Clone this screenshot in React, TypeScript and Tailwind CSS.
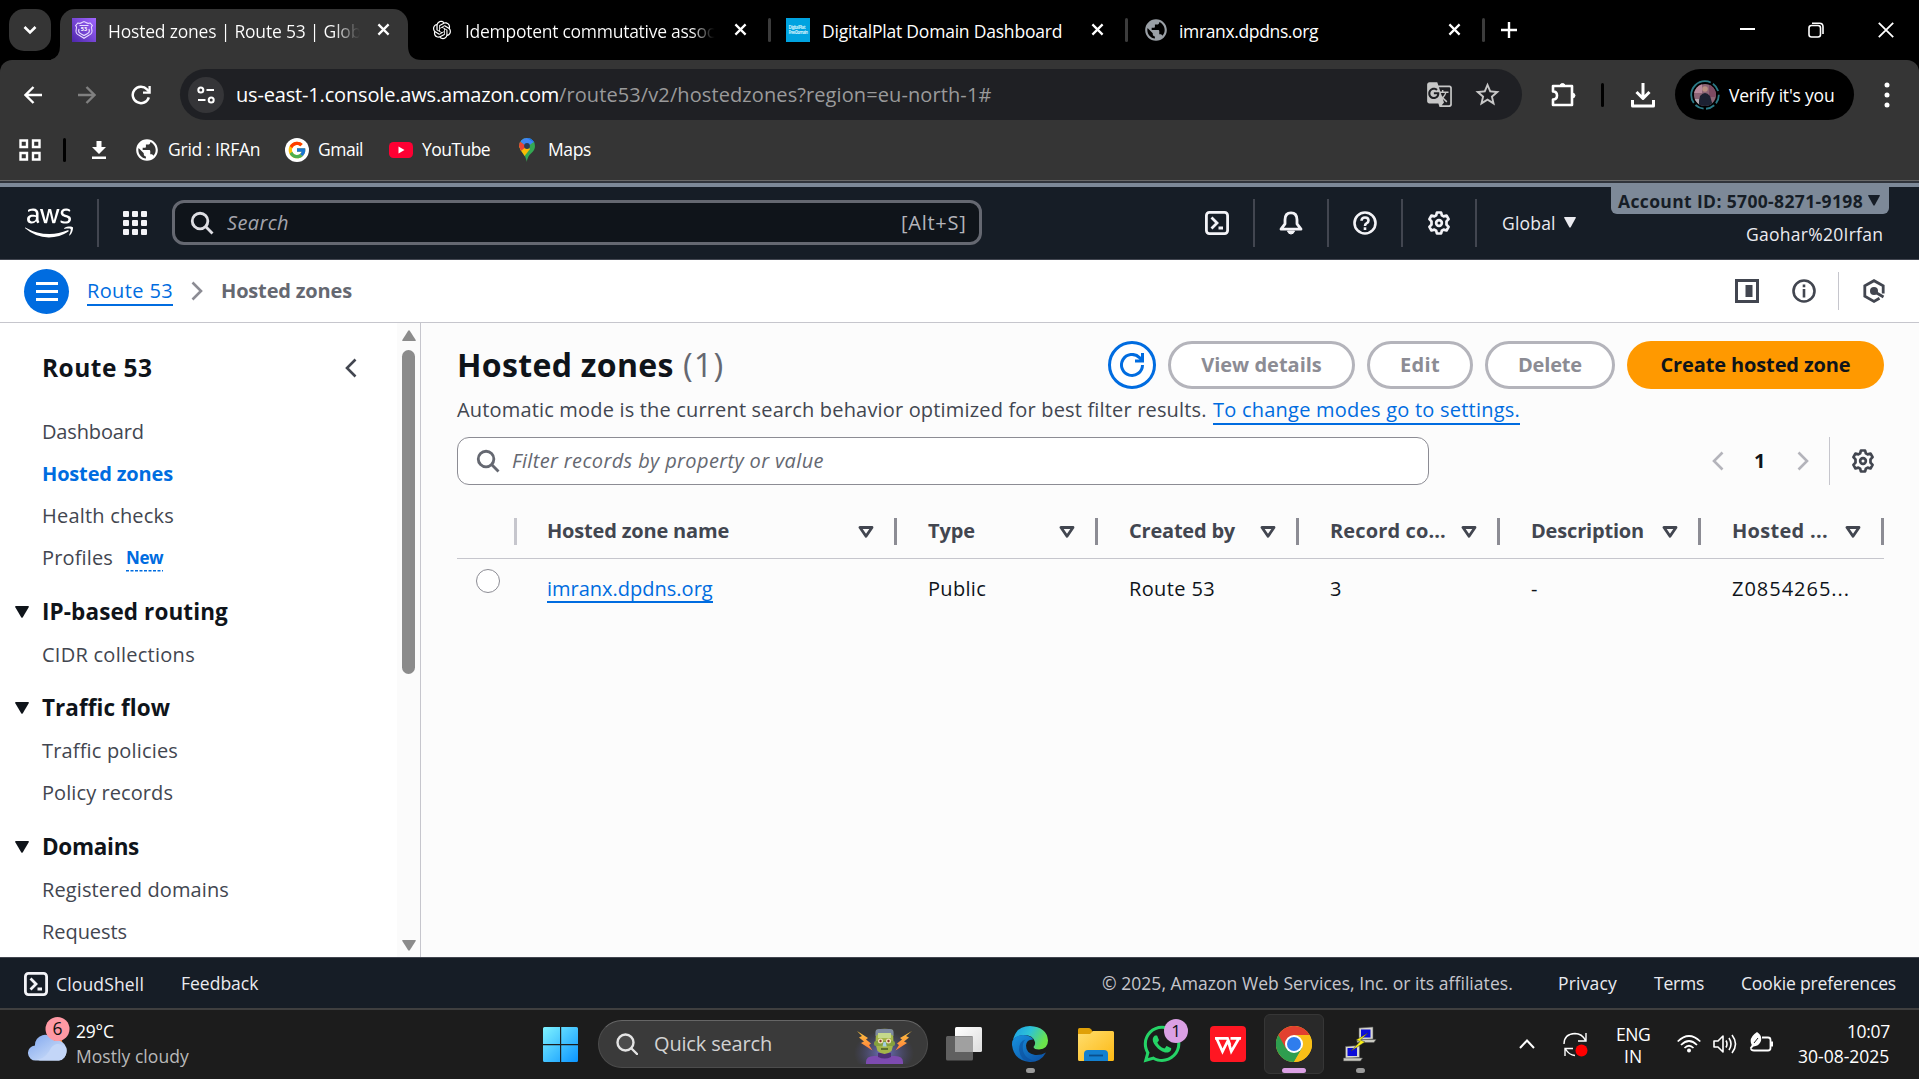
import React from "react";
import { FaAws, FaWhatsapp } from "react-icons/fa";
import { FcGoogle } from "react-icons/fc";
import { RiOpenaiFill } from "react-icons/ri";
import {
  MdPublic,
  MdGTranslate,
  MdStarBorder,
} from "react-icons/md";

function T({ c = "", children }: { c?: string; children: React.ReactNode }) {
  return <span className={`block shrink-0 whitespace-nowrap ${c}`}>{children}</span>;
}

/* ---------- shared icons ---------- */
function Cross({ c }: { c: string }) {
  return (
    <svg className={`h-[13px] w-[13px] shrink-0 ${c}`} viewBox="0 0 14 14" fill="none" stroke="#fff" strokeWidth="2.4">
      <path d="M1.5 1.5l11 11M12.5 1.5l-11 11" />
    </svg>
  );
}

function Gear({ c }: { c: string }) {
  return (
    <svg className={`h-6 w-6 shrink-0 ${c}`} viewBox="0 0 16 16" fill="none" stroke="currentColor" strokeWidth="1.8" strokeLinejoin="round">
      <path d="M6.6 1h2.8l.5 1.9 1.2.7 1.9-.6 1.4 2.4L13 6.900v2.200l1.400 1.500L13 13l-1.900-.6-1.200.7-.5 1.900H6.600l-.5-1.900-1.200-.7L3 13l-1.400-2.400L3 9.100V6.900L1.600 5.400 3 3l1.900.6 1.200-.7z" />
      <circle cx="8" cy="8" r="1.900" />
    </svg>
  );
}

function Magnifier({ c }: { c: string }) {
  return (
    <svg className={`h-6 w-6 shrink-0 ${c}`} viewBox="0 0 16 16" fill="none" stroke="currentColor" strokeWidth="1.900">
      <circle cx="6.700" cy="6.700" r="5.200" />
      <path d="M10.400 10.400l4.600 4.600" />
    </svg>
  );
}

function Shell() {
  return (
    <svg className="h-6 w-6 shrink-0" viewBox="0 0 24 24" fill="none" stroke="#f3f3f7" strokeWidth="2.800">
      <rect x="1.400" y="1.400" width="21.200" height="21.200" rx="3" />
      <path d="M6.500 6.500l5.500 5.500-5.500 5.500M13.500 17h4.500" />
    </svg>
  );
}

function Chevron({ c, right = false }: { c: string; right?: boolean }) {
  return (
    <svg className={`h-5 w-3 shrink-0 ${c}`} viewBox="0 0 12 20" fill="none" stroke="currentColor" strokeWidth="2.600">
      <path d={right ? "M1.5 1.5l8.500 8.500-8.500 8.500" : "M10.500 1.500L2 10l8.500 8.500"} />
    </svg>
  );
}

function Caret({ c }: { c: string }) {
  return (
    <svg className={`shrink-0 ${c}`} viewBox="0 0 14 12" fill="currentColor" preserveAspectRatio="none">
      <path d="M.8 0h12.400q1 .3.5 1.200L7.800 11.300q-.8 1-1.600 0L.3 1.200Q-.2.3.8 0z" />
    </svg>
  );
}

function Globe({ c }: { c: string }) {
  return <MdPublic className={`shrink-0 ${c}`} />;
}

/* ---------- browser chrome ---------- */
function TabStrip() {
  return (
    <div className="flex h-[60px] bg-black pt-[9px] text-[17.500px] leading-[24px] text-white">
      <div className="ml-[9px] flex h-[42px] w-[42px] items-center justify-center rounded-[15px] bg-[#353535]">
        <svg className="h-3 w-4" viewBox="0 0 16 12" fill="none" stroke="#fff" strokeWidth="2.600">
          <path d="M2.500 3l5.500 5.500L13.500 3" />
        </svg>
      </div>
      <div className="flex w-[9px] flex-col justify-end overflow-hidden">
        <svg className="-ml-[5px] h-[14px] w-[14px]" viewBox="0 0 14 14" fill="#353535">
          <path d="M14 0v14H0Q14 14 14 0z" />
        </svg>
      </div>
      <div className="flex h-[51px] w-[348px] rounded-t-[15px] bg-[#353535] pl-3">
        <svg className="mt-[9px] h-6 w-6" viewBox="0 0 24 24">
          <defs>
            <linearGradient id="r53" x1="0" y1="1" x2="1" y2="0">
              <stop offset="0" stopColor="#4d27aa" />
              <stop offset="1" stopColor="#a166ff" />
            </linearGradient>
          </defs>
          <rect width="24" height="24" fill="url(#r53)" />
          <path d="M6 5q2 1 4-.5l2-1 2 1q2 1.500 4 .5l2.300 2.500q-1.500 1.500-.5 4 1.200 4-3 5.800L12 20.300l-4.800-3q-4.200-1.800-3-5.800 1-2.500-.5-4z" fill="none" stroke="#e8dcff" strokeWidth="1.100" />
          <path d="M7.500 7.500h9M7 11q-1.200 3.600 1.800 4.700L12 17.500l3.200-1.800q3-1.100 1.800-4.700" fill="none" stroke="#e8dcff" strokeWidth="1.200" />
          <text x="12" y="13.300" fontSize="5.500" fontWeight="700" fill="#fff" textAnchor="middle" fontFamily="Open Sans">53</text>
        </svg>
        <div className="ml-3 mt-[10px] w-[252px] overflow-hidden bg-gradient-to-r from-white from-90% to-[#353535] bg-clip-text text-transparent">
          <T c="tracking-[-0.2px]">Hosted zones | Route 53 | Global</T>
        </div>
        <Cross c="ml-[17px] mt-[14px]" />
      </div>
      <div className="flex w-[23px] flex-col justify-end">
        <svg className="h-[14px] w-[14px]" viewBox="0 0 14 14" fill="#353535">
          <path d="M0 0v14h14Q0 14 0 0z" />
        </svg>
      </div>
      <RiOpenaiFill className="mt-[10px] h-[22px] w-[22px]" />
      <div className="ml-3 mt-[10px] w-[252px] overflow-hidden bg-gradient-to-r from-white from-90% to-black bg-clip-text text-transparent">
        <T c="tracking-[-0.27px]">Idempotent commutative assoc</T>
      </div>
      <Cross c="ml-[17px] mt-[14px]" />
      <div className="ml-[21px] mt-[9px] h-6 w-[3px] rounded bg-[#3c3c3c]" />
      <svg className="ml-[15px] mt-[9px] h-6 w-6" viewBox="0 0 24 24">
        <rect width="24" height="24" fill="#00a3e0" />
        <text x="2.500" y="11.300" fontSize="4.300" fontWeight="700" fill="#c8eefb" textLength="17" fontFamily="Open Sans">DigitalPlat</text>
        <text x="2.500" y="15.800" fontSize="4.300" fontWeight="700" fill="#c8eefb" textLength="19.500" fontFamily="Open Sans">FreeDomain</text>
      </svg>
      <T c="ml-3 mt-[10px] w-[240px] tracking-[-0.21px]">DigitalPlat Domain Dashboard</T>
      <Cross c="ml-[29px] mt-[14px]" />
      <div className="ml-[21px] mt-[9px] h-6 w-[3px] rounded bg-[#3c3c3c]" />
      <Globe c="ml-[15px] mt-[8px] h-[26px] w-[26px] text-[#9aa0a6]" />
      <T c="ml-[10px] mt-[10px] w-[139px] tracking-[-0.36px]">imranx.dpdns.org</T>
      <Cross c="ml-[130px] mt-[14px]" />
      <div className="ml-[21px] mt-[9px] h-6 w-[3px] rounded bg-[#3c3c3c]" />
      <svg className="ml-4 mt-[13px] h-4 w-4" viewBox="0 0 16 16" stroke="#fff" strokeWidth="2.400">
        <path d="M8 0v16M0 8h16" />
      </svg>
      <div className="flex-1" />
      <div className="mt-[19px] h-[2px] w-[15px] bg-white" />
      <svg className="ml-[53px] mt-[13px] h-4 w-4" viewBox="0 0 16 16" fill="none" stroke="#fff" strokeWidth="1.600">
        <rect x="1" y="3.500" width="11.500" height="11.500" rx="2.500" />
        <path d="M4 1.200h7.500q3.500 0 3.500 3.500V12" />
      </svg>
      <svg className="ml-[54px] mr-[25px] mt-[13px] h-4 w-4" viewBox="0 0 16 16" stroke="#fff" strokeWidth="1.800">
        <path d="M.8.8l14.400 14.400M15.200.8L.8 15.200" />
      </svg>
    </div>
  );
}

function Toolbar() {
  return (
    <div className="bg-black">
      <div className="flex h-[69px] items-start rounded-t-[12px] bg-[#353535] pt-[9px]">
        <div className="flex h-[51px] w-full items-center">
          <svg className="ml-[24px] h-[18px] w-[18px]" viewBox="0 0 18 18" fill="none" stroke="#fff" strokeWidth="2.400">
            <path d="M18 9H1.800M9.500 1L1.500 9l8 8" />
          </svg>
          <svg className="ml-9 h-[18px] w-[18px]" viewBox="0 0 18 18" fill="none" stroke="#808080" strokeWidth="2.400">
            <path d="M0 9h16.200M8.500 1l8 8-8 8" />
          </svg>
          <svg className="ml-[35px] h-5 w-5" viewBox="0 0 20 20" fill="none" stroke="#fff" strokeWidth="2.500">
            <path d="M17.800 12.300A8.200 8.200 0 1 1 16 4.400l2 2" />
            <path d="M18.600 1v6.600H12" strokeWidth="2.300" />
          </svg>
          <div className="ml-[29px] flex h-[51px] w-[1342px] items-center rounded-full bg-[#1f2024]">
            <div className="ml-2 flex h-9 w-9 items-center justify-center rounded-full bg-[#353538]">
              <svg className="h-[18px] w-[18px]" viewBox="0 0 18 18" fill="none" stroke="#fff" strokeWidth="2">
                <circle cx="3.800" cy="4" r="2.500" />
                <path d="M9.500 4H17M1 14h7.500" />
                <circle cx="14.200" cy="14" r="2.500" />
              </svg>
            </div>
            <div className="ml-3 flex text-[20px] leading-[28px]">
              <T c="w-[323px] tracking-[-0.17px] text-white">us-east-1.console.aws.amazon.com</T>
              <T c="w-[433px] tracking-[0.1px] text-[#9a9a9b]">/route53/v2/hostedzones?region=eu-north-1#</T>
            </div>
            <div className="flex-1" />
            <MdGTranslate className="h-[27px] w-[27px] text-[#c7c7c7]" />
            <MdStarBorder className="ml-[20px] mr-[20px] h-[29px] w-[29px] text-[#c7c7c7]" />
          </div>
          <svg className="ml-[29px] h-[26px] w-[26px]" viewBox="0 -1 26 26" fill="none" stroke="#fff" strokeWidth="2.600" strokeLinejoin="round">
            <path d="M2 3h19v19H2v-5.500q4 0 4-4t-4-4z" />
            <path d="M9 3q0-2.500 2.500-2.500T14 3zM21 10q3 0 3 2.500T21 15z" fill="#fff" strokeWidth="1" />
          </svg>
          <div className="ml-[24px] h-6 w-[3px] rounded bg-black" />
          <svg className="ml-[27px] h-[26px] w-6" viewBox="0 0 24 26" fill="none" stroke="#fff" strokeWidth="3">
            <path d="M12 1v15M5.500 10l6.500 6.500L18.500 10M1.500 18v6h21v-6" strokeLinejoin="round" />
          </svg>
          <div className="ml-[20px] flex h-[51px] w-[179px] items-center rounded-full bg-black text-[17.500px] leading-[24px] text-white">
            <svg className="ml-[15px] h-[30px] w-[30px]" viewBox="0 0 30 30">
              <circle cx="15" cy="15" r="13.800" fill="none" stroke="#2b7a86" strokeWidth="1.800" strokeDasharray="9 2.500 9 2.500 9 2.500 36 2.500 9 4" />
              <clipPath id="av"><circle cx="15" cy="15" r="11" /></clipPath>
              <g clipPath="url(#av)">
                <rect width="30" height="30" fill="#8c6576" />
                <rect x="4" y="4" width="8" height="9" fill="#b88a9c" />
                <rect x="19" y="5" width="8" height="12" fill="#7d4a62" />
                <circle cx="15" cy="9" r="2.800" fill="#b99081" />
                <path d="M8 26l2-10q5-6 10 0l3 10z" fill="#1c2132" />
                <rect x="4" y="19" width="5" height="8" fill="#b5aab2" />
              </g>
            </svg>
            <T c="ml-[9px] w-[106px] tracking-[-0.2px]">Verify it's you</T>
          </div>
          <svg className="ml-[30px] h-[26px] w-[6px]" viewBox="0 0 6 26" fill="#fff">
            <circle cx="3" cy="3" r="2.500" />
            <circle cx="3" cy="13" r="2.500" />
            <circle cx="3" cy="23" r="2.500" />
          </svg>
        </div>
      </div>
    </div>
  );
}

function Bookmarks() {
  return (
    <div className="flex h-[51px] items-center bg-[#353535] pb-[9px] text-[17.500px] leading-[24px] text-white">
      <svg className="ml-[19px] mt-[-1px] h-[22px] w-[22px]" viewBox="0 0 22 22" fill="none" stroke="#fff" strokeWidth="2.400">
        <path d="M1.500 1.500h6.500v6.500H1.500zM14 1.500h6.500v6.500H14zM1.500 14h6.500v6.500H1.500zM14 14h6.500v6.500H14z" />
      </svg>
      <div className="ml-[22px] h-6 w-[3px] rounded bg-black" />
      <svg className="ml-[26px] h-[18px] w-[14px]" viewBox="0 0 14 18" fill="#fff">
        <path d="M4.500 0h5v6H14l-7 7-7-7h4.500zM0 15.500h14V18H0z" />
      </svg>
      <Globe c="ml-[28px] h-[26px] w-[26px]" />
      <T c="mb-[2px] ml-[8px] w-[92px] tracking-[-0.25px]">Grid : IRFAn</T>
      <div className="ml-[25px] flex h-6 w-6 items-center justify-center rounded-full bg-white">
        <FcGoogle className="h-5 w-5" />
      </div>
      <T c="mb-[2px] ml-[9px] w-[45px] tracking-[-0.5px]">Gmail</T>
      <svg className="ml-[26px] h-4 w-6" viewBox="0 0 24 16">
        <rect width="24" height="16" rx="4.500" fill="#f03" />
        <path d="M9.500 4.500v7l6-3.500z" fill="#fff" />
      </svg>
      <T c="mb-[2px] ml-[9px] w-[68px] tracking-[-0.55px]">YouTube</T>
      <svg className="ml-[29px] h-6 w-4" viewBox="0 0 16 24">
        <clipPath id="pin"><path d="M8 24Q7 19 4 15.500T0 8a8 8 0 0 1 16 0q0 4-4 7.500T8 24z" /></clipPath>
        <g clipPath="url(#pin)">
          <rect width="16" height="24" fill="#34a853" />
          <path d="M0 8l8 0 3 3-7 9-4-4z" fill="#fbbc04" />
          <path d="M0 3l8 5-6 5H0z" fill="#ea4335" />
          <path d="M2 0h14v3L8 9 1.500 3.500z" fill="#4285f4" />
          <path d="M8 0h8v5z" fill="#1a73e8" />
        </g>
        <circle cx="8" cy="8" r="2.900" fill="#2b3b55" />
      </svg>
      <T c="mb-[2px] ml-[13px] w-[43px] tracking-[-0.4px]">Maps</T>
    </div>
  );
}

/* ---------- AWS console ---------- */
function NavDivider({ c }: { c: string }) {
  return <div className={`h-12 w-[2px] shrink-0 bg-[#424650] ${c}`} />;
}

function ConsoleNav() {
  return (
    <div className="flex h-[73px] border-b border-[#424650] bg-[#161d26]">
      <div className="flex h-[71px] items-center">
        <FaAws className="ml-[25px] h-12 w-12 text-white" />
        <NavDivider c="ml-[24px]" />
        <svg className="ml-[24px] h-6 w-6" viewBox="0 0 24 24" fill="#f3f3f7">
          {[0, 9, 18].map((y) => [0, 9, 18].map((x) => <rect key={`${x}-${y}`} x={x} y={y} width="6" height="6" rx="1" />))}
        </svg>
        <div className="ml-[25px] flex h-[45px] w-[810px] items-center rounded-[12px] border-[3px] border-[#656871] bg-[#0f141a] pr-3 text-[20px] leading-[30px]">
          <Magnifier c="ml-[15px] text-[#dedee3]" />
          <T c="ml-[13px] w-[62px] italic tracking-[0.36px] text-[#a4a4ad]">Search</T>
          <div className="flex-1" />
          <T c="w-[66px] tracking-[0.75px] text-[#b4b4bb]">[Alt+S]</T>
        </div>
      </div>
      <div className="flex-1" />
      <div className="flex h-[71px] items-center">
        <Shell />
        <NavDivider c="ml-6" />
        <svg className="ml-6 h-6 w-6" viewBox="0 0 24 24" fill="none" stroke="#f3f3f7" strokeWidth="2.800" strokeLinejoin="round">
          <path d="M12 1.800q-6 0-6 7v4l-4 5.400h20l-4-5.400v-4q0-7-6-7z" />
          <path d="M8.500 20h7q-.8 3-3.500 3t-3.500-3z" fill="#f3f3f7" strokeWidth="1" />
        </svg>
        <NavDivider c="ml-6" />
        <svg className="ml-6 h-6 w-6" viewBox="0 0 24 24" fill="none" stroke="#f3f3f7" strokeWidth="2.600">
          <circle cx="12" cy="12" r="10.500" />
          <path d="M8.500 9.800q0-3.300 3.500-3.300t3.500 3q0 1.800-1.800 2.700T12 15" />
          <path d="M12 16.300v2.700" />
        </svg>
        <NavDivider c="ml-6" />
        <Gear c="ml-6 text-[#f3f3f7]" />
        <NavDivider c="ml-6" />
        <T c="ml-[25px] w-[54px] text-[17.500px] leading-6 tracking-[0.2px] text-[#ebebf0]">Global</T>
        <Caret c="ml-2 h-[11px] w-3 text-[#ebebf0]" />
      </div>
      <div className="ml-[35px] mr-[30px] flex w-[278px] flex-col items-end">
        <div className="flex h-[27px] w-[278px] items-center rounded-b-[6px] bg-[#7d8998] pl-[7px] text-[#161d26]">
          <T c="w-[245px] text-[17.500px] font-bold leading-[26px] tracking-[0.36px]">Account ID: 5700-8271-9198</T>
          <Caret c="ml-[5px] h-[11px] w-3" />
        </div>
        <T c="mr-[6px] mt-[8px] w-[137px] text-[17.500px] leading-6 tracking-[0.27px] text-[#ebebf0]">Gaohar%20Irfan</T>
      </div>
    </div>
  );
}

function Breadcrumbs() {
  return (
    <div className="flex h-[63px] items-center border-b border-[#c6c6cd] bg-white text-[20px] leading-[27px]">
      <div className="ml-6 flex h-[45px] w-[45px] items-center justify-center rounded-full bg-[#006ce0]">
        <svg className="h-[19px] w-[22px]" viewBox="0 0 22 19" fill="#fff">
          <path d="M0 0h22v3H0zM0 8h22v3H0zM0 16h22v3H0z" />
        </svg>
      </div>
      <T c="ml-[18px] w-[86px] border-b-2 border-[#006ce0] tracking-[0.37px] text-[#006ce0]">Route 53</T>
      <Chevron c="ml-[18px] text-[#8c8c94]" right />
      <T c="mb-[2px] ml-[18px] w-[131px] font-bold tracking-[-0.17px] text-[#656871]">Hosted zones</T>
      <div className="flex-1" />
      <svg className="h-6 w-6" viewBox="0 0 24 24" fill="none" stroke="#424650" strokeWidth="3">
        <rect x="1.500" y="1.500" width="21" height="21" />
        <rect x="10.500" y="6" width="7" height="12" fill="#424650" stroke="none" />
      </svg>
      <svg className="ml-[33px] h-6 w-6" viewBox="0 0 24 24" fill="none" stroke="#424650" strokeWidth="2.600">
        <circle cx="12" cy="12" r="10.500" />
        <path d="M12 10v8.500M12 5.500v2.800" />
      </svg>
      <div className="ml-[22px] h-[38px] w-px bg-[#c6c6cd]" />
      <svg className="ml-[24px] mr-[34px] h-6 w-[22px]" viewBox="0 0 22 24" fill="none" stroke="#424650" strokeWidth="2.800">
        <path d="M20.200 14.500V6.900L11 1.700 1.800 6.900v10.300L11 22.400l5.500-3.200" />
        <circle cx="11" cy="12" r="4" fill="#424650" stroke="none" />
        <path d="M12 13l8.500 5" />
      </svg>
    </div>
  );
}

function NavItem({ children, c }: { children: React.ReactNode; c: string }) {
  return (
    <div className="flex h-[42px] items-center pl-[42px] text-[20px] leading-[30px] text-[#424650]">
      <T c={c}>{children}</T>
    </div>
  );
}

function NavSection({ children, c }: { children: React.ReactNode; c: string }) {
  return (
    <div className="flex items-center pl-[15px] text-[#0f141a]">
      <Caret c="h-3 w-[14px]" />
      <T c={`ml-[13px] font-bold text-[22.500px] leading-[30px] ${c}`}>{children}</T>
    </div>
  );
}

function Sidebar() {
  return (
    <div className="flex h-[634px] w-[421px] shrink-0 border-r border-[#c6c6cd] bg-white">
      <div className="w-[397px] overflow-hidden">
        <div className="flex h-[88px] items-center pl-[42px] pt-[2px]">
          <T c="w-[111px] text-[24.500px] font-bold leading-[30px] tracking-[0.45px] text-[#0f141a]">Route 53</T>
          <Chevron c="ml-[192px] text-[#424650]" />
        </div>
        <NavItem c="tracking-[-0.14px]">Dashboard</NavItem>
        <NavItem c="font-bold tracking-[-0.17px] text-[#006ce0]">Hosted zones</NavItem>
        <NavItem c="tracking-[0.2px]">Health checks</NavItem>
        <div className="flex h-[42px] items-center pl-[42px] text-[20px] leading-[30px] text-[#424650]">
          <T c="w-[71px] tracking-[0.15px]">Profiles</T>
          <div className="ml-[13px] mt-[2px] w-[37px]">
            <T c="text-[17px] font-bold leading-[24px] tracking-[-0.4px] text-[#006ce0]">New</T>
            <svg className="block h-[2px] w-[37px]" viewBox="0 0 37 2">
              <path d="M0 .7h37" stroke="#006ce0" strokeWidth="1.400" strokeDasharray="3 1.500" />
            </svg>
          </div>
        </div>
        <div className="h-[18px]" />
        <NavSection c="tracking-[0.1px]">IP-based routing</NavSection>
        <div className="h-[7px]" />
        <NavItem c="tracking-[0.26px]">CIDR collections</NavItem>
        <div className="h-[17px]" />
        <NavSection c="tracking-[0.06px]">Traffic flow</NavSection>
        <div className="h-[7px]" />
        <NavItem c="tracking-[0.17px]">Traffic policies</NavItem>
        <NavItem c="tracking-[0.08px]">Policy records</NavItem>
        <div className="h-[18px]" />
        <NavSection c="tracking-[-0.3px]">Domains</NavSection>
        <div className="h-[7px]" />
        <NavItem c="tracking-[0.11px]">Registered domains</NavItem>
        <NavItem c="tracking-[-0.06px]">Requests</NavItem>
      </div>
      <div className="flex w-[23px] flex-col items-center bg-[#fbfbfb] pt-[7px]">
        <Caret c="h-[11px] w-[14px] rotate-180 text-[#8b8b8b]" />
        <div className="mt-[9px] h-[324px] w-[13px] rounded-full bg-[#8b8b8b]" />
        <Caret c="mt-[266px] h-[11px] w-[14px] text-[#8b8b8b]" />
      </div>
    </div>
  );
}

function PillButton({ c, t, children }: { c: string; t: string; children: React.ReactNode }) {
  return (
    <div className={`flex h-12 shrink-0 items-center justify-center rounded-full border-[3px] border-[#b4b4bb] bg-white font-bold text-[#8c8c94] ${c}`}>
      <T c={t}>{children}</T>
    </div>
  );
}

function HeadCell({ w, t, children }: { w: string; t: string; children: React.ReactNode }) {
  return (
    <div className={`flex shrink-0 items-center ${w}`}>
      <T c={`mb-[2px] font-bold ${t}`}>{children}</T>
      <div className="flex-1" />
      <svg className="mr-[20px] h-3 w-4 shrink-0" viewBox="0 0 16 12" fill="none" stroke="#424650" strokeWidth="2.800" strokeLinejoin="round">
        <path d="M2 1.500h12L8 10.300z" />
      </svg>
      <div className="h-[27px] w-[3px] shrink-0 bg-[#8c8c94]" />
    </div>
  );
}

function Content() {
  return (
    <div className="flex h-[634px] min-w-0 flex-1 flex-col bg-[#fcfcfc] pl-9 pr-[35px] pt-[18px] text-[20px] leading-[30px]">
      <div className="flex h-12 items-center">
        <T c="w-[217px] text-[32px] font-bold leading-[42px] tracking-[0.33px] text-[#0f141a]">Hosted zones</T>
        <T c="ml-[9px] w-[41px] text-[33px] leading-[42px] tracking-[0.9px] text-[#656871]">(1)</T>
        <div className="flex-1" />
        <div className="flex gap-3">
          <div className="flex h-12 w-12 items-center justify-center rounded-full border-[3px] border-[#006ce0] bg-white">
            <svg className="h-6 w-6" viewBox="0 0 24 24" fill="none" stroke="#006ce0" strokeWidth="3">
              <path d="M22.500 12A10.500 10.500 0 1 1 19.500 4.600L22 7.500" />
              <path d="M22.500 0v8H15" />
            </svg>
          </div>
          <PillButton c="w-[187px]" t="">View details</PillButton>
          <PillButton c="w-[106px]" t="tracking-[0.3px]">Edit</PillButton>
          <PillButton c="w-[130px]" t="tracking-[-0.17px]">Delete</PillButton>
          <div className="flex h-12 w-[257px] items-center justify-center rounded-full bg-[#ff9900] font-bold text-[#0f141a]">
            <T c="tracking-[-0.13px]">Create hosted zone</T>
          </div>
        </div>
      </div>
      <div className="mt-[6px] flex h-[30px] text-[#424650]">
        <T c="w-[750px] tracking-[0.17px]">Automatic mode is the current search behavior optimized for best filter results.</T>
        <T c="ml-[6px] w-[307px] border-b-2 border-[#006ce0] tracking-[0.23px] text-[#006ce0]">To change modes go to settings.</T>
      </div>
      <div className="mt-[12px] flex items-center">
        <div className="flex h-12 w-[972px] items-center rounded-[12px] border-[1.500px] border-[#8c8c94] bg-white">
          <Magnifier c="ml-[18px] text-[#656871]" />
          <T c="ml-[12px] w-[312px] italic tracking-[0.36px] text-[#656871]">Filter records by property or value</T>
        </div>
        <div className="flex-1" />
        <Chevron c="text-[#b4b4bb]" />
        <T c="ml-[30px] w-[12px] font-bold text-[#0f141a]">1</T>
        <Chevron c="ml-[31px] text-[#b4b4bb]" right />
        <div className="ml-[20px] h-12 w-px bg-[#c6c6cd]" />
        <Gear c="ml-[21px] mr-[9px] text-[#424650]" />
      </div>
      <div className="mt-[20px] flex h-[54px] items-center border-b border-[#c6c6cd] text-[#424650]">
        <div className="ml-[57px] h-[27px] w-[3px] shrink-0 bg-[#c6c6cd]" />
        <HeadCell w="ml-[30px] w-[350px]" t="tracking-[-0.18px]">Hosted zone name</HeadCell>
        <HeadCell w="ml-[31px] w-[170px]" t="tracking-[-0.1px]">Type</HeadCell>
        <HeadCell w="ml-[31px] w-[170px]" t="tracking-[-0.21px]">Created by</HeadCell>
        <HeadCell w="ml-[31px] w-[170px]" t="tracking-[0.13px]">Record co...</HeadCell>
        <HeadCell w="ml-[31px] w-[170px]" t="tracking-[-0.18px]">Description</HeadCell>
        <HeadCell w="ml-[31px] w-[152px]" t="tracking-[0.29px]">Hosted ...</HeadCell>
      </div>
      <div className="flex pt-[15px] text-[#0f141a]">
        <div className="ml-[19px] mt-[-5px] h-6 w-6 rounded-full border-[1.500px] border-[#8c8c94] bg-white" />
        <T c="ml-[47px] h-[29px] w-[166px] border-b-2 border-[#006ce0] text-[#006ce0]">imranx.dpdns.org</T>
        <T c="ml-[215px] w-[58px] tracking-[0.3px]">Public</T>
        <T c="ml-[143px] w-[86px] tracking-[0.37px]">Route 53</T>
        <T c="ml-[115px] w-[12px]">3</T>
        <T c="ml-[189px] w-[8px]">-</T>
        <T c="ml-[193px] w-[118px] tracking-[0.98px]">Z0854265...</T>
      </div>
    </div>
  );
}

function Footer() {
  return (
    <div className="flex h-[51px] items-center border-t border-[#424650] bg-[#161d26] text-[17.500px] leading-6 text-[#ebebf0]">
      <div className="ml-6 mt-[2px]"><Shell /></div>
      <T c="ml-2 mt-[1px] w-[88px] tracking-[0.16px]">CloudShell</T>
      <T c="ml-[37px] w-[77px]">Feedback</T>
      <div className="flex-1" />
      <T c="w-[411px] tracking-[0.05px] text-[#c6c6cd]">© 2025, Amazon Web Services, Inc. or its affiliates.</T>
      <T c="ml-[45px] w-[59px] tracking-[0.18px]">Privacy</T>
      <T c="ml-[37px] w-[50px] tracking-[-0.2px]">Terms</T>
      <T c="ml-[37px] mr-[23px] w-[155px] tracking-[-0.15px]">Cookie preferences</T>
    </div>
  );
}

/* ---------- taskbar ---------- */
function Taskbar() {
  return (
    <div className="flex h-[71px] border-t-2 border-[#3f3f3f] bg-[#1c1c1c] text-[17.500px] leading-[24px] text-white">
      <svg className="ml-[28px] mt-[6px] h-[48px] w-[43px]" viewBox="0 0 43 48">
        <defs>
          <linearGradient id="cl" x1="0" y1="0" x2="1" y2="1">
            <stop offset="0" stopColor="#7fa6ee" />
            <stop offset="1" stopColor="#dbe8fb" />
          </linearGradient>
        </defs>
        <circle cx="27" cy="27" r="7.500" fill="#f9821b" />
        <path d="M8 44.500a7.500 7.500 0 0 1-1-15 10 10 0 0 1 19-5 8 8 0 0 1 5 20z" fill="url(#cl)" />
        <path d="M29 28a8 8 0 0 1 2 16.500H12q-4-1-4-1 8 0 13-8 3-7 8-7.500z" fill="#c3d6f8" />
        <circle cx="29.500" cy="13" r="12" fill="#ff99a4" />
        <text x="29.500" y="19" fontSize="17.500" textAnchor="middle" fill="#111" fontFamily="Open Sans">6</text>
      </svg>
      <div className="ml-[5px] mt-[9px] h-[50px]">
        <T c="h-[25px] tracking-[-0.2px]">29°C</T>
        <T c="tracking-[0.05px] text-[#b9b9b9] w-[113px]">Mostly cloudy</T>
      </div>
      <svg className="ml-[354px] mt-[17px] h-[35px] w-[35px]" viewBox="0 0 35 35">
        <defs>
          <linearGradient id="win" x1="0" y1="0" x2="1" y2="1">
            <stop offset="0" stopColor="#7ff3ff" />
            <stop offset="1" stopColor="#0a94ff" />
          </linearGradient>
        </defs>
        <path fill="url(#win)" d="M1.500 0H17v17H0V1.500Q0 0 1.500 0zM18.200 0h15.300Q35 0 35 1.500V17H18.200zM0 18.200h17V35H1.500Q0 35 0 33.500zM18.200 18.200H35v15.300q0 1.500-1.500 1.500H18.200z" />
      </svg>
      <div className="ml-5 mt-[10px] flex h-12 w-[330px] items-center rounded-full border border-[#4c4c4c] border-t-[#666] bg-[#3a3a3a] text-[20px] leading-[28px]">
        <svg className="ml-[17px] h-[22px] w-[22px]" viewBox="0 0 22 22" fill="none" stroke="#e4e4e4" strokeWidth="2.400">
          <circle cx="9.500" cy="9.500" r="8" fill="#4b4b4b" />
          <path d="M15.500 15.500l5.500 5.500" strokeLinecap="round" />
        </svg>
        <T c="ml-[16px] w-[118px] tracking-[-0.17px] text-[#d2d2d2]">Quick search</T>
        <svg className="ml-[82px] mt-[4px] h-[36px] w-[60px]" viewBox="0 0 60 36">
          <defs>
            <radialGradient id="glow">
              <stop offset="0" stopColor="#8083e8" stopOpacity=".8" />
              <stop offset="1" stopColor="#5555a0" stopOpacity="0" />
            </radialGradient>
            <linearGradient id="bolt" x1="0" y1="0" x2="0" y2="1">
              <stop offset="0" stopColor="#ffc83e" />
              <stop offset="1" stopColor="#ff7a3c" />
            </linearGradient>
          </defs>
          <ellipse cx="30" cy="25" rx="30" ry="22" fill="url(#glow)" />
          <path d="M12 36v-2q0-6 8-6h21q8 0 8 6v2z" fill="#7d4bb0" />
          <path d="M24 25h13v4q-6 3-13 0z" fill="#4d2f75" />
          <path d="M22 2q9-2.500 17 0l.5 14-2 7q-7 6-14 0l-2-7z" fill="#a4b54a" />
          <rect x="20" y="13" width="21" height="5" rx="2" fill="#86a03e" />
          <path d="M21.500 8V4q0-3 4-3h10q4 0 4 3v4q-3-3-9-1.500Q25 5 21.500 8z" fill="#7f8aa0" />
          <rect x="24" y="5" width="13" height="5" fill="#c5d88b" />
          <circle cx="26.500" cy="13" r="2.500" fill="#f2e2b8" /><circle cx="34.500" cy="13" r="2.500" fill="#f2e2b8" />
          <circle cx="26.500" cy="13" r="1.200" fill="#8c3b2c" /><circle cx="34.500" cy="13" r="1.200" fill="#8c3b2c" />
          <path d="M29.500 14h2.200l1 4.500h-4.200z" fill="#a5cfe0" />
          <path d="M27 21h7" stroke="#465a25" strokeWidth="1.500" />
          <path d="M3 3l11 7-2 1.500 5 4-2 1.500 3.500 5.500L7 15l3-1.500-5-4L8 8zM58 3L46 10l2 1.500-5 4 2 1.500-3.500 5.500L53 15l-3-1.500 5-4L52 8z" fill="url(#bolt)" />
        </svg>
      </div>
      <svg className="ml-[18px] mt-[17px] h-[34px] w-[36px]" viewBox="0 0 36 34">
        <defs>
          <linearGradient id="tv" x1="0" y1="0" x2="1" y2="1">
            <stop offset="0" stopColor="#fff" />
            <stop offset="1" stopColor="#dcdcdc" />
          </linearGradient>
        </defs>
        <rect x="9" y="0" width="27" height="25" rx="1.500" fill="url(#tv)" />
        <rect x="0" y="9" width="27" height="24.500" rx="1.500" fill="#686868" fillOpacity=".9" />
        <path d="M9 9.500h18V25H9z" fill="#a0a0a0" />
      </svg>
      <div className="ml-[30px] mt-4 flex w-9 flex-col items-center">
        <svg className="h-9 w-9" viewBox="0 0 36 36">
          <defs>
            <linearGradient id="e1" x1="0" y1="0" x2="1" y2=".4">
              <stop offset="0" stopColor="#1a9be8" />
              <stop offset=".5" stopColor="#2ec3d6" />
              <stop offset="1" stopColor="#6be34a" />
            </linearGradient>
            <linearGradient id="e2" x1="0" y1="0" x2="1" y2="1">
              <stop offset="0" stopColor="#1792e0" />
              <stop offset="1" stopColor="#0c4da0" />
            </linearGradient>
          </defs>
          <path d="M1 14Q4 0 18 0q17 1 18 14.500 0 8.500-9 9-5 0-5.500-2.500 2-1.500 1.500-5Q21 9 12 9 4 9.500 1 14z" fill="url(#e1)" />
          <path d="M.3 15Q3 9 11 9q7 0 10.500 4.500-7-.5-7.500 6 0 8 9 9.500 6 .5 11-2.500Q29 36 18 36 2 35 0 19q0-2 .3-4z" fill="url(#e2)" />
          <path d="M11 18q-2 14 12 17Q9 38 7 24q0-9 6.500-10.500Q11.500 15 11 18z" fill="#0b4f9c" opacity=".6" />
        </svg>
        <div className="mt-[6px] h-[5px] w-[9px] rounded-full bg-[#9a9a9a]" />
      </div>
      <svg className="ml-[30px] mt-[18px] h-[33px] w-9" viewBox="0 0 36 33">
        <defs>
          <linearGradient id="fo" x1="0" y1="0" x2="1" y2="1">
            <stop offset="0" stopColor="#ffdd6e" />
            <stop offset="1" stopColor="#fdb913" />
          </linearGradient>
        </defs>
        <path d="M0 1.500Q0 0 1.500 0h9q1.500 0 2.500 1.200L15 4v6H0z" fill="#e0a008" />
        <path d="M0 6h12l3-3h19.500Q36 3 36 4.500v27q0 1.500-1.500 1.500h-33Q0 33 0 31.500z" fill="url(#fo)" />
        <path d="M6 33v-7q0-4 4-4h16q4 0 4 4v7z" fill="#1380d0" />
        <path d="M11 27.500h14" stroke="#0a4f8c" strokeWidth="1.800" />
      </svg>
      <div className="relative ml-[30px] mt-4 h-9 w-9">
        <FaWhatsapp className="-ml-[3px] -mt-[3px] h-[42px] w-[42px] text-[#25d366]" />
        <div className="absolute -right-2 -top-[7px] flex h-6 w-6 items-center justify-center rounded-full bg-[#dba0e4] text-[17px] text-[#111]">1</div>
      </div>
      <svg className="ml-[30px] mt-4 h-9 w-9" viewBox="0 0 36 36">
        <rect width="36" height="36" rx="4" fill="#ff1622" />
        <path d="M5 12.300h12.500L20 19M6.500 12.300l6 13.200L18 14.500l3.300 11L29 12.300h-8.500M21.500 12.300h9.500" fill="none" stroke="#fff" strokeWidth="2.700" />
      </svg>
      <div className="ml-[18px] mt-1 flex h-[60px] w-[60px] flex-col items-center rounded-[6px] border border-[#363636] bg-[#292929] pt-[11px]">
        <svg className="h-9 w-9" viewBox="0 0 36 36">
          <circle cx="18" cy="18" r="18" fill="#f9bf17" />
          <path d="M18 18L2.400 9A18 18 0 0 0 18 36l8-14z" fill="#2e9e4f" />
          <path d="M2.400 9a18 18 0 0 1 31.200 0H18v9l-8 4.500z" fill="#e2402f" />
          <path d="M18 9h15.600a18 18 0 0 1-15.600 27l8-13.500z" fill="#f9bf17" />
          <circle cx="18" cy="18" r="9" fill="#fff" />
          <circle cx="18" cy="18" r="7" fill="#2f7ded" />
        </svg>
        <div className="mt-[6px] h-[5px] w-6 rounded-full bg-[#dba0e4]" />
      </div>
      <div className="ml-[18px] mt-4 flex w-9 flex-col items-center">
        <svg className="h-9 w-9" viewBox="0 0 36 36">
          <g id="pc">
            <path d="M17 2l14-1v12l-14 1z" fill="#d8d8d0" stroke="#555" strokeWidth=".6" />
            <path d="M19 3.500h9.500v8H19z" fill="#0b0bd8" />
            <path d="M15 13.500h19l-2 3H15z" fill="#c9c9c0" stroke="#555" strokeWidth=".6" />
          </g>
          <use href="#pc" x="-13.500" y="18.500" />
          <path d="M26 7l-12 7 4 1.500L9 25l14-9-4.500-2z" fill="#fbf215" stroke="#333" strokeWidth=".5" />
        </svg>
        <div className="mt-[6px] h-[5px] w-[9px] rounded-full bg-[#9a9a9a]" />
      </div>
      <div className="flex-1" />
      <svg className="mt-[29px] h-[10px] w-4" viewBox="0 0 16 10" fill="none" stroke="#fff" strokeWidth="2">
        <path d="M1 9l7-7.500L15 9" />
      </svg>
      <svg className="ml-[28px] mt-[22px] h-[25px] w-[25px]" viewBox="0 0 25 25" fill="none" stroke="#fff" strokeWidth="1.400">
        <path d="M1 12Q1 2 12 1.500q7 0 10.500 7M23 1v8h-8M12 23.500Q6 23 2.500 17M2 24v-7.500h8" />
        <circle cx="18.500" cy="18.500" r="6" fill="#f00" stroke="none" />
      </svg>
      <div className="ml-[28px] mt-[12px]">
        <T c="h-[22px] w-[34px] tracking-[-0.5px]">ENG</T>
        <T c="ml-[8px] w-[18px]">IN</T>
      </div>
      <svg className="ml-[27px] mt-[25px] h-[18px] w-6" viewBox="0 0 24 18" fill="none" stroke="#fff" strokeWidth="1.700">
        <path d="M.7 6.500q11.300-11 22.600 0M4 10q8-8 16 0M7.500 13q4.500-4.500 9 0" />
        <circle cx="12" cy="15.500" r="2" fill="#fff" stroke="none" />
      </svg>
      <svg className="ml-3 mt-[24px] h-5 w-6" viewBox="0 0 24 20" fill="none" stroke="#fff" strokeWidth="1.600" strokeLinejoin="round">
        <path d="M1 7h4l5-5v16l-5-5H1zM13 6.500q2 3.500 0 7M16 4q4 6 0 12M19 1q7 9 0 18" />
      </svg>
      <svg className="ml-3 mt-[22px] h-[21px] w-6" viewBox="0 0 24 21" fill="none" stroke="#fff" strokeWidth="1.800">
        <path d="M13 5.500h6q2.500 0 2.500 2.500v8q0 2.500-2.500 2.500H5q-3 0-3-2" />
        <path d="M22.500 9.500v5" strokeWidth="3" />
        <path d="M8 0q6 4 3.500 10-2 4-7 4.500L2 17 .8 16l2-3Q-1 6 8 0z" fill="#fff" stroke="none" />
        <path d="M5 11l4-5" stroke="#1c1c1c" strokeWidth="1" />
      </svg>
      <div className="ml-[25px] mr-[29px] mt-[9px] flex flex-col items-end">
        <T c="h-[25px] tracking-[-0.3px]">10:07</T>
        <T c="w-[92px]">30-08-2025</T>
      </div>
    </div>
  );
}

export default function App() {
  return (
    <div className="flex h-[1079px] w-[1919px] flex-col overflow-hidden font-['Open_Sans',sans-serif]">
      <TabStrip />
      <Toolbar />
      <Bookmarks />
      <div className="h-[3px] border-t border-[#6a6a6a] bg-[#30343b]" />
      <div className="h-1 bg-[#7d8998]" />
      <ConsoleNav />
      <Breadcrumbs />
      <div className="flex">
        <Sidebar />
        <Content />
      </div>
      <Footer />
      <Taskbar />
    </div>
  );
}
